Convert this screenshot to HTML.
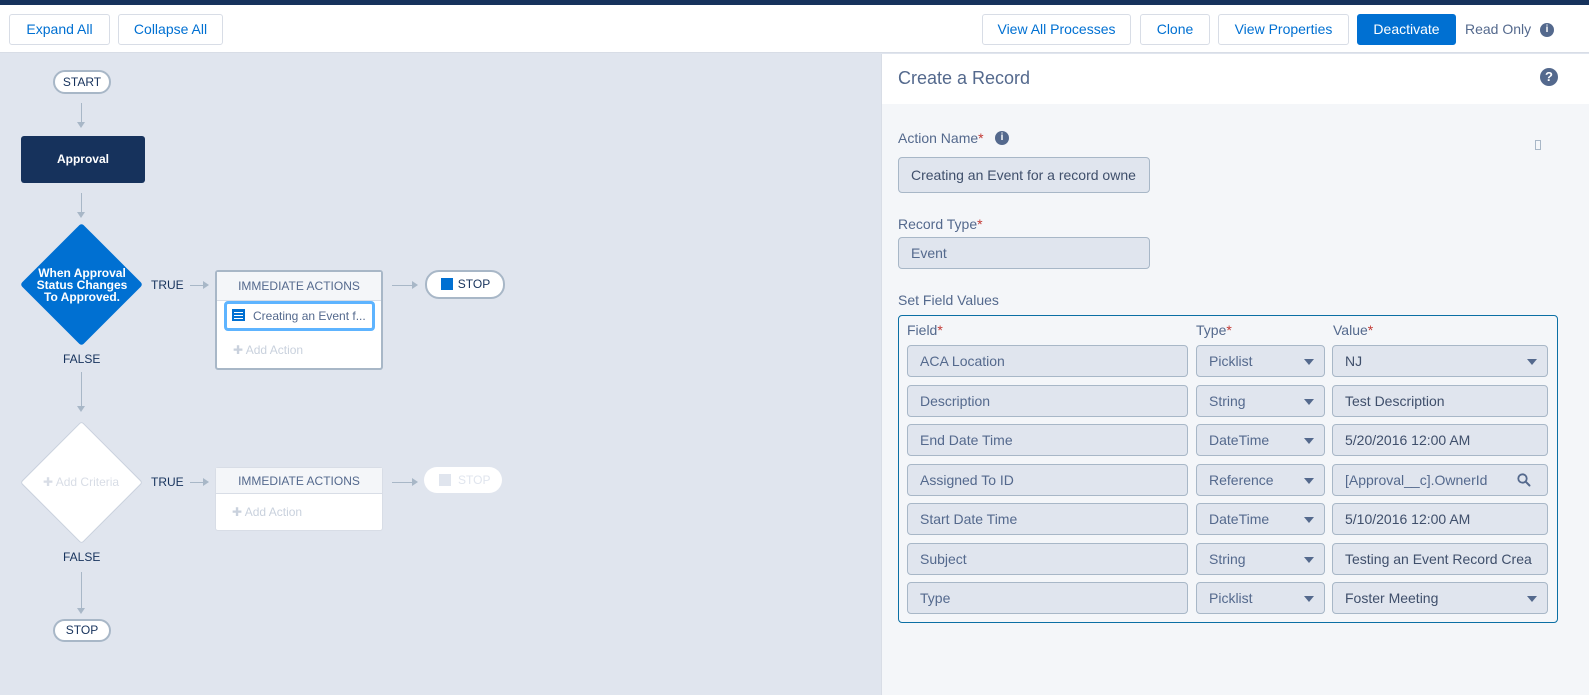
<!DOCTYPE html>
<html><head><meta charset="utf-8"><style>
*{box-sizing:border-box;margin:0;padding:0}
body{width:1589px;height:695px;overflow:hidden;font-family:"Liberation Sans",Arial,sans-serif;background:#e0e5ee;position:relative;font-size:13px}
.a{position:absolute}
.btn{position:absolute;top:14px;height:31px;border:1px solid #d8dde6;border-radius:3px;background:#fff;color:#0070d2;font-size:14px;line-height:29px;text-align:center}
.pill{position:absolute;border:2px solid #a8b7c7;border-radius:14px;background:#fff;color:#16325c;font-size:12px;text-align:center}
.vl{position:absolute;width:1px;background:#a8b7c7}
.hl{position:absolute;height:1px;background:#a8b7c7}
.ah{position:absolute;width:0;height:0;border-left:4px solid transparent;border-right:4px solid transparent;border-top:6px solid #a8b7c7}
.ar{position:absolute;width:0;height:0;border-top:4px solid transparent;border-bottom:4px solid transparent;border-left:6px solid #a8b7c7}
.lbl{position:absolute;color:#16325c;font-size:12px}
.in{position:absolute;height:32px;border:1px solid #a8b7c7;border-radius:4px;background:#e0e5ee;color:#54698d;font-size:14px;line-height:30px;padding-left:12px;white-space:nowrap;overflow:hidden}
.v{color:#3f4f6b}
.tri{position:absolute;right:10px;top:13px;width:0;height:0;border-left:5px solid transparent;border-right:5px solid transparent;border-top:6px solid #54698d}
.fl{position:absolute;color:#54698d;font-size:14px}
.st{color:#c23934}
</style></head><body>
<div class="a" style="left:0;top:0;width:1589px;height:5px;background:#16325c"></div>
<div class="a" style="left:0;top:5px;width:1589px;height:48px;background:#fff;border-bottom:1px solid #d8dde6"></div>
<div class="btn" style="left:9px;width:101px">Expand All</div>
<div class="btn" style="left:118px;width:105px">Collapse All</div>
<div class="btn" style="left:982px;width:149px">View All Processes</div>
<div class="btn" style="left:1140px;width:70px">Clone</div>
<div class="btn" style="left:1218px;width:131px">View Properties</div>
<div class="btn" style="left:1357px;width:99px;background:#0070d2;border-color:#0070d2;color:#fff">Deactivate</div>
<div class="a" style="left:1465px;top:21px;color:#54698d;font-size:14px">Read Only</div>
<div class="a" style="left:1540px;top:23px;width:14px;height:14px;border-radius:50%;background:#54698d;color:#fff;font-size:10px;font-weight:bold;text-align:center;line-height:14px">i</div>

<!-- canvas -->
<div class="pill" style="left:53px;top:70px;width:58px;height:24px;line-height:20px">START</div>
<div class="vl" style="left:81px;top:103px;height:22px"></div><div class="ah" style="left:77px;top:122px"></div>
<div class="a" style="left:21px;top:136px;width:124px;height:47px;background:#16325c;border-radius:3px;color:#fff;font-size:12px;font-weight:bold;text-align:center;line-height:47px">Approval</div>
<div class="vl" style="left:81px;top:193px;height:22px"></div><div class="ah" style="left:77px;top:212px"></div>
<div class="a" style="left:38px;top:241px;width:87px;height:87px;background:#0070d2;transform:rotate(45deg);border-radius:3px"></div>
<div class="a" style="left:25px;top:267px;width:114px;color:#fff;font-size:12px;font-weight:bold;text-align:center;line-height:12px">When Approval<br>Status Changes<br>To Approved.</div>
<div class="lbl" style="left:151px;top:278px">TRUE</div>
<div class="hl" style="left:190px;top:285px;width:14px"></div><div class="ar" style="left:203px;top:281px"></div>
<div class="a" style="left:215px;top:270px;width:168px;height:100px;background:#fff;border:2px solid #a8b7c7;border-radius:3px"></div>
<div class="a" style="left:217px;top:272px;width:164px;height:29px;background:#f4f6f9;border-bottom:1px solid #d8dde6;color:#54698d;font-size:12px;text-align:center;line-height:28px">IMMEDIATE ACTIONS</div>
<div class="a" style="left:224px;top:301px;width:151px;height:30px;border:3px solid #5eb4ff;border-radius:4px;background:#fff;color:#54698d;font-size:12px;line-height:24px;padding-left:26px">Creating an Event f...</div>
<div class="a" style="left:232px;top:309px;width:13px;height:12px;background:#0070d2"><div style="margin:3px 2px;height:1px;background:#fff;box-shadow:0 3px #fff,0 6px #fff"></div></div>
<div class="a" style="left:233px;top:343px;color:#c9d1dd;font-size:12px">✚ Add Action</div>
<div class="hl" style="left:392px;top:285px;width:22px"></div><div class="ar" style="left:412px;top:281px"></div>
<div class="pill" style="left:425px;top:270px;width:80px;height:29px;line-height:25px;font-size:12px;padding-left:18px">STOP</div>
<div class="a" style="left:441px;top:278px;width:12px;height:12px;background:#0070d2"></div>
<div class="lbl" style="left:63px;top:352px">FALSE</div>
<div class="vl" style="left:81px;top:372px;height:36px"></div><div class="ah" style="left:77px;top:406px"></div>
<div class="a" style="left:38px;top:439px;width:87px;height:87px;background:#fff;border:1px solid #c9d1dd;transform:rotate(45deg);border-radius:3px"></div>
<div class="a" style="left:43px;top:475px;color:#d8dde6;font-size:12px">✚ Add Criteria</div>
<div class="lbl" style="left:151px;top:475px">TRUE</div>
<div class="hl" style="left:190px;top:482px;width:14px"></div><div class="ar" style="left:203px;top:478px"></div>
<div class="a" style="left:215px;top:467px;width:168px;height:64px;background:#fff;border:1px solid #d8dde6;border-radius:3px"></div>
<div class="a" style="left:216px;top:468px;width:166px;height:26px;background:#f4f6f9;border-bottom:1px solid #d8dde6;color:#54698d;font-size:12px;text-align:center;line-height:26px">IMMEDIATE ACTIONS</div>
<div class="a" style="left:232px;top:505px;color:#c9d1dd;font-size:12px">✚ Add Action</div>
<div class="hl" style="left:392px;top:482px;width:22px"></div><div class="ar" style="left:412px;top:478px"></div>
<div class="a" style="left:424px;top:467px;width:78px;height:26px;background:#fff;border-radius:13px;color:#e0e5ee;font-size:12px;line-height:26px;padding-left:34px">STOP</div>
<div class="a" style="left:439px;top:474px;width:12px;height:12px;background:#e0e5ee"></div>
<div class="lbl" style="left:63px;top:550px">FALSE</div>
<div class="vl" style="left:81px;top:572px;height:38px"></div><div class="ah" style="left:77px;top:608px"></div>
<div class="pill" style="left:53px;top:619px;width:58px;height:23px;line-height:19px">STOP</div>

<!-- right panel -->
<div class="a" style="left:881px;top:54px;width:708px;height:641px;background:#f4f6f9;border-left:1px solid #d8dde6"></div>
<div class="a" style="left:882px;top:54px;width:707px;height:50px;background:#fff"></div>
<div class="a" style="left:898px;top:68px;color:#54698d;font-size:18px">Create a Record</div>
<div class="a" style="left:1540px;top:68px;width:18px;height:18px;border-radius:50%;background:#54698d;color:#fff;font-size:13px;font-weight:bold;text-align:center;line-height:18px">?</div>
<div class="fl" style="left:898px;top:130px">Action Name<span class="st">*</span></div>
<div class="a" style="left:995px;top:131px;width:14px;height:14px;border-radius:50%;background:#54698d;color:#fff;font-size:10px;font-weight:bold;text-align:center;line-height:14px">i</div>
<div class="a" style="left:1535px;top:140px;width:6px;height:10px;border:1px solid #a8b7c7"></div>
<div class="in v" style="left:898px;top:157px;width:252px;height:36px;line-height:34px">Creating an Event for a record owne</div>
<div class="fl" style="left:898px;top:216px">Record Type<span class="st">*</span></div>
<div class="in" style="left:898px;top:237px;width:252px;height:32px">Event</div>
<div class="fl" style="left:898px;top:292px">Set Field Values</div>
<div class="a" style="left:898px;top:315px;width:660px;height:308px;border:1px solid #0b6fa4;border-radius:4px"></div>
<div class="fl" style="left:907px;top:322px">Field<span class="st">*</span></div>
<div class="fl" style="left:1196px;top:322px">Type<span class="st">*</span></div>
<div class="fl" style="left:1333px;top:322px">Value<span class="st">*</span></div>

<div class="in" style="left:907px;top:345px;width:281px">ACA Location</div>
<div class="in" style="left:1196px;top:345px;width:129px">Picklist<i class="tri"></i></div>
<div class="in v" style="left:1332px;top:345px;width:216px">NJ<i class="tri"></i></div>

<div class="in" style="left:907px;top:385px;width:281px">Description</div>
<div class="in" style="left:1196px;top:385px;width:129px">String<i class="tri"></i></div>
<div class="in v" style="left:1332px;top:385px;width:216px">Test Description</div>

<div class="in" style="left:907px;top:424px;width:281px">End Date Time</div>
<div class="in" style="left:1196px;top:424px;width:129px">DateTime<i class="tri"></i></div>
<div class="in v" style="left:1332px;top:424px;width:216px">5/20/2016 12:00 AM</div>

<div class="in" style="left:907px;top:464px;width:281px">Assigned To ID</div>
<div class="in" style="left:1196px;top:464px;width:129px">Reference<i class="tri"></i></div>
<div class="in" style="left:1332px;top:464px;width:216px">[Approval__c].OwnerId<svg style="position:absolute;right:16px;top:8px" width="14" height="14" viewBox="0 0 14 14"><circle cx="5.5" cy="5.5" r="4.2" fill="none" stroke="#54698d" stroke-width="1.8"/><path d="M8.6 8.6L12.5 12.5" stroke="#54698d" stroke-width="2" stroke-linecap="round"/></svg></div>

<div class="in" style="left:907px;top:503px;width:281px">Start Date Time</div>
<div class="in" style="left:1196px;top:503px;width:129px">DateTime<i class="tri"></i></div>
<div class="in v" style="left:1332px;top:503px;width:216px">5/10/2016 12:00 AM</div>

<div class="in" style="left:907px;top:543px;width:281px">Subject</div>
<div class="in" style="left:1196px;top:543px;width:129px">String<i class="tri"></i></div>
<div class="in v" style="left:1332px;top:543px;width:216px">Testing an Event Record Crea</div>

<div class="in" style="left:907px;top:582px;width:281px">Type</div>
<div class="in" style="left:1196px;top:582px;width:129px">Picklist<i class="tri"></i></div>
<div class="in v" style="left:1332px;top:582px;width:216px">Foster Meeting<i class="tri"></i></div>
</body></html>
